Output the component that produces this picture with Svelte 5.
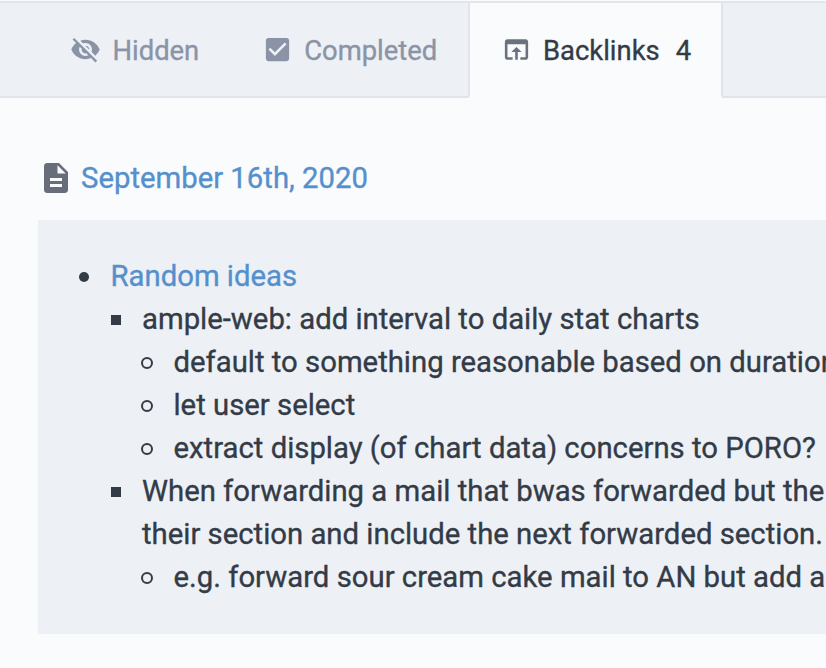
<script>
  const icons = {
    hidden: 'M12 7c2.76 0 5 2.24 5 5 0 .65-.13 1.26-.36 1.83l2.92 2.92c1.51-1.26 2.7-2.89 3.43-4.75-1.73-4.39-6-7.5-11-7.5-1.4 0-2.74.25-3.98.7l2.16 2.16C10.74 7.13 11.35 7 12 7zM2 4.27l2.28 2.28.46.46C3.08 8.3 1.78 10.02 1 12c1.73 4.39 6 7.5 11 7.5 1.55 0 3.03-.3 4.38-.84l.42.42L19.73 22 21 20.73 3.27 3 2 4.27zM7.53 9.8l1.55 1.55c-.05.21-.08.43-.08.65 0 1.66 1.34 3 3 3 .22 0 .44-.03.65-.08l1.55 1.55c-.67.33-1.41.53-2.2.53-2.76 0-5-2.24-5-5 0-.79.2-1.53.53-2.2zm4.31-.78l3.15 3.15.02-.16c0-1.66-1.34-3-3-3l-.17.01z',
    completed: 'M19 3H5c-1.11 0-2 .9-2 2v14c0 1.1.89 2 2 2h14c1.11 0 2-.9 2-2V5c0-1.1-.89-2-2-2zm-9 14l-5-5 1.41-1.41L10 14.17l7.59-7.59L19 8l-9 9z',
    backlinks: 'M19 4H5c-1.11 0-2 .9-2 2v12c0 1.1.89 2 2 2h4v-2H5V8h14v10h-4v2h4c1.1 0 2-.9 2-2V6c0-1.1-.89-2-2-2zm-7 6l-4 4h3v6h2v-6h3l-4-4z'
  };
  const notes = [
    {
      text: 'ample-web: add interval to daily stat charts',
      items: [
        'default to something reasonable based on duration',
        'let user select',
        'extract display (of chart data) concerns to PORO?'
      ]
    },
    {
      text: 'When forwarding a mail that bwas forwarded but the\ntheir section and include the next forwarded section.',
      items: ['e.g. forward sour cream cake mail to AN but add a']
    }
  ];
</script>

<div class="page">
  <nav>
    <div class="inactive">
      <button class="tab">
        <svg viewBox="0 0 24 24"><path d={icons.hidden} /></svg><span>Hidden</span>
      </button>
      <button class="tab second">
        <svg viewBox="0 0 24 24"><path d={icons.completed} /></svg><span>Completed</span>
      </button>
    </div>
    <button class="tab active">
      <svg viewBox="0 0 24 24"><path d={icons.backlinks} /></svg><span>Backlinks</span><span class="count">4</span>
    </button>
    <div class="rest"></div>
  </nav>

  <header>
    <svg viewBox="0 0 24 24"><path d="M14 2H6c-1.1 0-1.99.9-1.99 2L4 20c0 1.1.89 2 1.99 2H18c1.1 0 2-.9 2-2V8l-6-6zm2 16H8v-2h8v2zm0-4H8v-2h8v2zm-3-5V3.5L18.5 9H13z" /></svg>
    <a href="#note">September 16th, 2020</a>
  </header>

  <section>
    <ul class="disc">
      <li>
        <a href="#ideas">Random ideas</a>
        <ul class="square">
          {#each notes as note}
            <li>
              <span>{note.text}</span>
              <ul class="ring">
                {#each note.items as item}
                  <li><span>{item}</span></li>
                {/each}
              </ul>
            </li>
          {/each}
        </ul>
      </li>
    </ul>
  </section>
</div>

<style>
  :global(body) { margin: 0; background: #fafbfd; }
  .page {
    width: 826px;
    height: 668px;
    overflow: hidden;
    box-sizing: border-box;
    padding-top: 1px;
    background: #fafbfd;
    color: #333b47;
    font-family: Roboto, sans-serif;
    font-size: 29.3px;
    -webkit-text-stroke: 0.35px currentColor;
  }
  nav {
    display: flex;
    height: 97px;
    box-sizing: border-box;
    border-top: 2px solid #e2e5e9;
  }
  .inactive, .rest {
    box-sizing: border-box;
    background: #edf0f5;
    border-bottom: 2px solid #e1e4ea;
  }
  .inactive {
    display: flex;
    width: 470px;
    padding-left: 70px;
    border-right: 2px solid #e1e4ea;
    border-bottom-right-radius: 3px;
  }
  .rest {
    flex: 1;
    border-left: 2px solid #e1e4ea;
    border-bottom-left-radius: 3px;
  }
  .tab {
    display: flex;
    align-items: center;
    height: 94px;
    padding: 0;
    border: 0;
    background: none;
    color: #8a94a6;
    font: 27.4px/40px Roboto, sans-serif;
    -webkit-text-stroke: 0.35px currentColor;
  }
  .tab span { padding-top: 1px; }
  .tab svg {
    width: 31px;
    height: 31px;
    margin: 0 11.5px 1px 0;
    fill: currentColor;
  }
  .second { margin-left: 62.5px; }
  .active {
    box-sizing: border-box;
    width: 251px;
    padding-left: 30.5px;
    color: #333b47;
  }
  .active svg { fill: #6a7280; }
  .tab .count { margin-left: 16px; }
  header {
    display: flex;
    align-items: center;
    height: 43px;
    padding: 59px 0 0 38px;
  }
  header svg {
    width: 36px;
    height: 36px;
    margin: 0 7px 1px 0;
    fill: #686e79;
  }
  header a { margin-bottom: 1px; }
  a { color: #5590cd; text-decoration: none; }
  section {
    box-sizing: border-box;
    width: 788px;
    height: 414px;
    margin: 20px 0 0 38px;
    padding: 35px 0 0 41px;
    background: #edf0f5;
    line-height: 43px;
    white-space: pre;
  }
  ul { margin: 0; padding: 0; list-style: none; white-space: normal; }
  li { position: relative; padding-left: 31.5px; }
  li > span, li > a { display: block; white-space: pre; }
  li::before {
    content: '';
    position: absolute;
    box-sizing: border-box;
    left: 0;
    top: 17px;
    width: 10px;
    height: 10px;
    background: #333b47;
  }
  .disc > li::before { border-radius: 50%; }
  .ring > li::before {
    left: -1px;
    top: 16px;
    width: 12px;
    height: 12px;
    background: none;
    border: 2px solid #333b47;
    border-radius: 50%;
  }
</style>
